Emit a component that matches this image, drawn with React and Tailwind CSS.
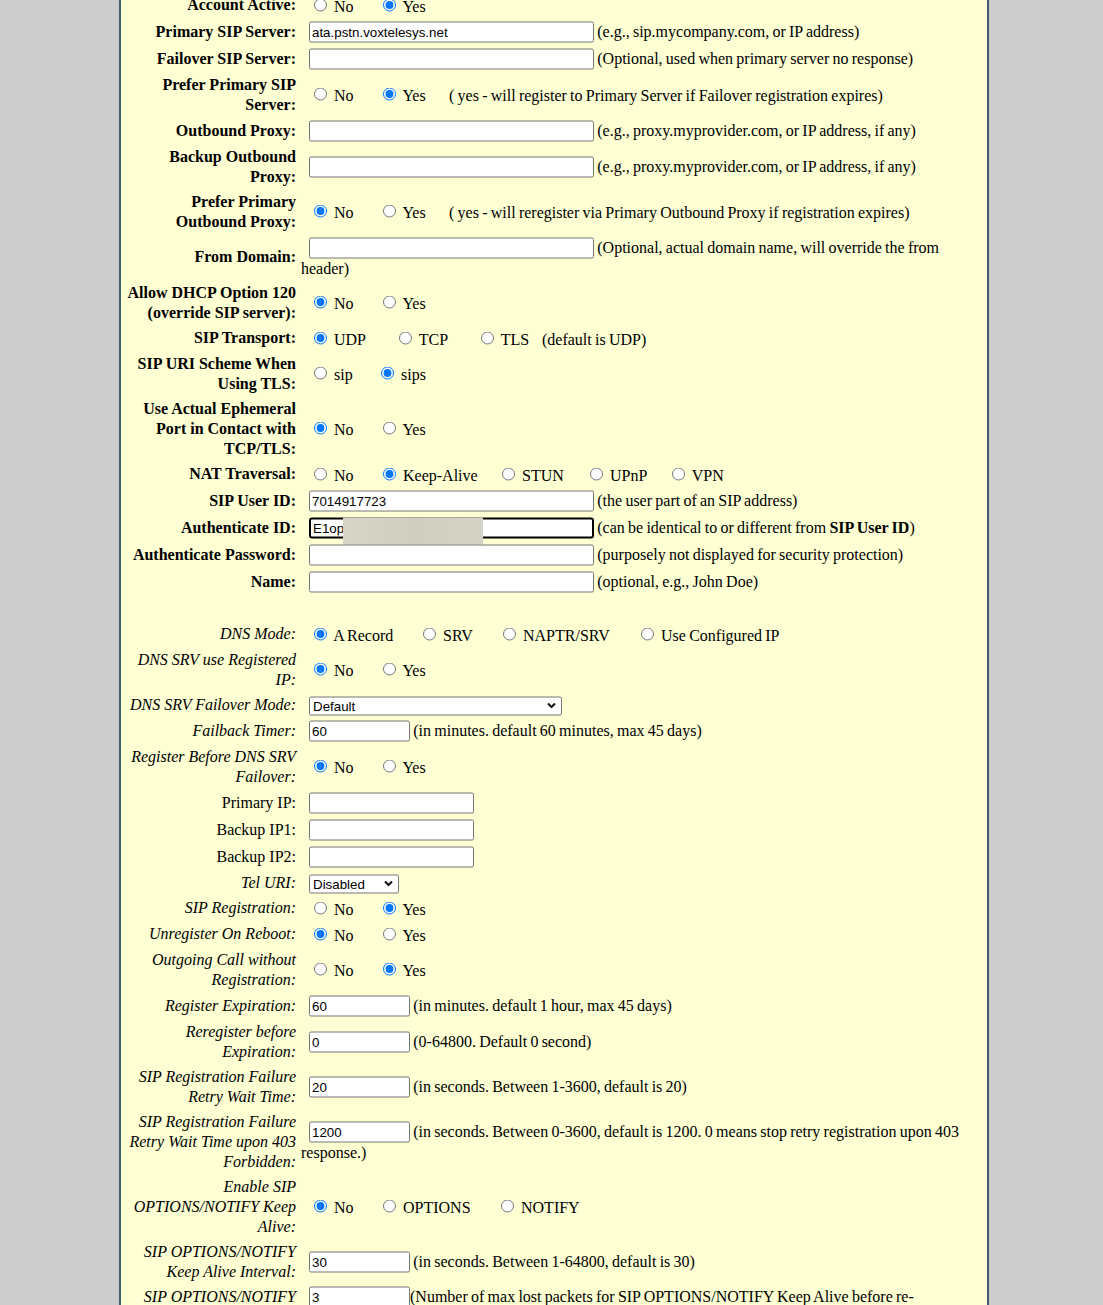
import React from "react";
import clsx from "clsx";

// ---- small form pieces ----------------------------------------------------

function Field({ w = "w-[285px]", value = "", focused = false }) {
  return (
    <input
      type="text"
      readOnly
      value={value}
      className={clsx(
        "h-[21px] bg-white px-[2px] align-baseline text-[13.33px] text-black font-['Liberation_Sans',Arial,sans-serif] outline-none [word-spacing:0]",
        w,
        focused
          ? "border-2 border-black rounded-[3px]"
          : "border border-[#767676] rounded-[2px]"
      )}
    />
  );
}

function Pick({ w, value }) {
  return (
    <span
      className={clsx(
        "inline-flex h-[19px] items-center justify-between rounded-[2px] border border-[#767676] bg-white pl-[3px] pr-[5px] align-middle text-[13.33px] leading-none font-['Liberation_Sans',Arial,sans-serif]",
        w
      )}
    >
      <span>{value}</span>
      <svg width="9" height="6" viewBox="0 0 9 6">
        <polyline points="1,1 4.5,4.5 8,1" fill="none" stroke="#111" strokeWidth="2" />
      </svg>
    </span>
  );
}

// opts: [label, checked, widthClass]
function Radios({ opts }) {
  return opts.map(([text, checked, w], i) => (
    <label key={i} className={clsx("inline-block whitespace-nowrap", w)}>
      <input
        type="radio"
        readOnly
        checked={checked}
        className="ml-[5px] mr-[3.75px] mt-[3px]"
      />{" "}
      {text}
    </label>
  ));
}

const noYes = (yes) => [
  ["No", !yes, "w-[69px]"],
  ["Yes", yes],
];

// ---- row data -------------------------------------------------------------

const rows = [
  { label: ["Account Active:"], kind: "b", h: "min-h-[26px]", value: <Radios opts={noYes(true)} /> },
  {
    label: ["Primary SIP Server:"], kind: "b", h: "min-h-[27px]",
    value: <><Field value="ata.pstn.voxtelesys.net" /> (e.g., sip.mycompany.com, or IP address)</>,
  },
  {
    label: ["Failover SIP Server:"], kind: "b", h: "min-h-[27px]",
    value: <><Field /> (Optional, used when primary server no response)</>,
  },
  {
    label: ["Prefer Primary SIP", "Server:"], kind: "b", h: "min-h-[26px]",
    value: (
      <>
        <Radios opts={[["No", false, "w-[69px]"], ["Yes", true, "w-[71px]"]]} />( yes - will register to Primary Server if Failover registration expires)
      </>
    ),
  },
  {
    label: ["Outbound Proxy:"], kind: "b", h: "min-h-[27px]",
    value: <><Field /> (e.g., proxy.myprovider.com, or IP address, if any)</>,
  },
  {
    label: ["Backup Outbound", "Proxy:"], kind: "b", h: "min-h-[27px]",
    value: <><Field /> (e.g., proxy.myprovider.com, or IP address, if any)</>,
  },
  {
    label: ["Prefer Primary", "Outbound Proxy:"], kind: "b", h: "min-h-[26px]",
    value: (
      <>
        <Radios opts={[["No", true, "w-[69px]"], ["Yes", false, "w-[71px]"]]} />( yes - will reregister via Primary Outbound Proxy if registration expires)
      </>
    ),
  },
  {
    label: ["From Domain:"], kind: "b", h: "min-h-[46px]",
    value: <><Field /> (Optional, actual domain name, will override the from<br />header)</>,
  },
  {
    label: ["Allow DHCP Option 120", "(override SIP server):"], kind: "b", h: "min-h-[26px]",
    value: <Radios opts={noYes(false)} />,
  },
  {
    label: ["SIP Transport:"], kind: "b", h: "min-h-[26px]",
    value: (
      <>
        <Radios opts={[["UDP", true, "w-[85px]"], ["TCP", false, "w-[82px]"], ["TLS", false, "w-[66px]"]]} />(default is UDP)
      </>
    ),
  },
  {
    label: ["SIP URI Scheme When", "Using TLS:"], kind: "b", h: "min-h-[26px]",
    value: <Radios opts={[["sip", false, "w-[67px]"], ["sips", true]]} />,
  },
  {
    label: ["Use Actual Ephemeral", "Port in Contact with", "TCP/TLS:"], kind: "b", h: "min-h-[26px]",
    value: <Radios opts={noYes(false)} />,
  },
  {
    label: ["NAT Traversal:"], kind: "b", h: "min-h-[26px]",
    value: (
      <Radios
        opts={[
          ["No", false, "w-[69px]"],
          ["Keep-Alive", true, "w-[119px]"],
          ["STUN", false, "w-[88px]"],
          ["UPnP", false, "w-[82px]"],
          ["VPN", false],
        ]}
      />
    ),
  },
  {
    label: ["SIP User ID:"], kind: "b", h: "min-h-[27px]",
    value: <><Field value="7014917723" /> (the user part of an SIP address)</>,
  },
  {
    label: ["Authenticate ID:"], kind: "b", h: "min-h-[27px]",
    value: (
      <>
        <span className="relative inline-block">
          <Field value="E1op" focused />
          {/* masked part of the id */}
          <span className="absolute left-[34px] top-0 h-[27px] w-[140px] bg-gradient-to-r from-[#d6d6c8] via-[#cfcfc1] to-[#d4d4c6]" />
        </span>{" "}
        (can be identical to or different from <b>SIP User ID</b>)
      </>
    ),
  },
  {
    label: ["Authenticate Password:"], kind: "b", h: "min-h-[27px]",
    value: <><Field /> (purposely not displayed for security protection)</>,
  },
  {
    label: ["Name:"], kind: "b", h: "min-h-[27px]",
    value: <><Field /> (optional, e.g., John Doe)</>,
  },
  { label: [""], kind: "n", h: "min-h-[26px]", value: null },
  {
    label: ["DNS Mode:"], kind: "i", h: "min-h-[26px]",
    value: (
      <Radios
        opts={[
          ["A Record", true, "w-[109px]"],
          ["SRV", false, "w-[80px]"],
          ["NAPTR/SRV", false, "w-[138px]"],
          ["Use Configured IP", false],
        ]}
      />
    ),
  },
  {
    label: ["DNS SRV use Registered", "IP:"], kind: "i", h: "min-h-[26px]",
    value: <Radios opts={noYes(false)} />,
  },
  {
    label: ["DNS SRV Failover Mode:"], kind: "i", h: "min-h-[25px]",
    value: <Pick w="w-[253px]" value="Default" />,
  },
  {
    label: ["Failback Timer:"], kind: "i", h: "min-h-[27px]",
    value: <><Field w="w-[101px]" value="60" /> (in minutes. default 60 minutes, max 45 days)</>,
  },
  {
    label: ["Register Before DNS SRV", "Failover:"], kind: "i", h: "min-h-[26px]",
    value: <Radios opts={noYes(false)} />,
  },
  { label: ["Primary IP:"], kind: "n", h: "min-h-[27px]", value: <Field w="w-[165px]" /> },
  { label: ["Backup IP1:"], kind: "n", h: "min-h-[27px]", value: <Field w="w-[165px]" /> },
  { label: ["Backup IP2:"], kind: "n", h: "min-h-[27px]", value: <Field w="w-[165px]" /> },
  { label: ["Tel URI:"], kind: "i", h: "min-h-[25px]", value: <Pick w="w-[90px]" value="Disabled" /> },
  { label: ["SIP Registration:"], kind: "i", h: "min-h-[26px]", value: <Radios opts={noYes(true)} /> },
  { label: ["Unregister On Reboot:"], kind: "i", h: "min-h-[26px]", value: <Radios opts={noYes(false)} /> },
  {
    label: ["Outgoing Call without", "Registration:"], kind: "i", h: "min-h-[26px]",
    value: <Radios opts={noYes(true)} />,
  },
  {
    label: ["Register Expiration:"], kind: "i", h: "min-h-[27px]",
    value: <><Field w="w-[101px]" value="60" /> (in minutes. default 1 hour, max 45 days)</>,
  },
  {
    label: ["Reregister before", "Expiration:"], kind: "i", h: "min-h-[27px]",
    value: <><Field w="w-[101px]" value="0" /> (0-64800. Default 0 second)</>,
  },
  {
    label: ["SIP Registration Failure", "Retry Wait Time:"], kind: "i", h: "min-h-[27px]",
    value: <><Field w="w-[101px]" value="20" /> (in seconds. Between 1-3600, default is 20)</>,
  },
  {
    label: ["SIP Registration Failure", "Retry Wait Time upon 403", "Forbidden:"], kind: "i", h: "min-h-[27px]",
    value: (
      <>
        <Field w="w-[101px]" value="1200" /> (in seconds. Between 0-3600, default is 1200. 0 means stop retry registration upon 403
        <br />
        response.)
      </>
    ),
  },
  {
    label: ["Enable SIP", "OPTIONS/NOTIFY Keep", "Alive:"], kind: "i", h: "min-h-[26px]",
    value: <Radios opts={[["No", true, "w-[69px]"], ["OPTIONS", false, "w-[118px]"], ["NOTIFY", false]]} />,
  },
  {
    label: ["SIP OPTIONS/NOTIFY", "Keep Alive Interval:"], kind: "i", h: "min-h-[27px]",
    value: <><Field w="w-[101px]" value="30" /> (in seconds. Between 1-64800, default is 30)</>,
  },
  {
    label: ["SIP OPTIONS/NOTIFY", "Keep Alive Max Lost:"], kind: "i", h: "min-h-[27px]",
    value: (
      <>
        <Field w="w-[101px]" value="3" />(Number of max lost packets for SIP OPTIONS/NOTIFY Keep Alive before re-
        <br />
        registration)
      </>
    ),
  },
];

const labelKind = {
  b: "font-bold",
  i: "italic",
  n: "",
};

export default function App() {
  return (
    <div className="min-h-screen bg-[#cccccc] text-[16px] text-black font-['Liberation_Serif','Times_New_Roman',serif]">
      <div className="ml-[119px] min-h-screen w-[870px] overflow-hidden border-x-2 border-[#3f5b72] bg-[#ffffd4]">
        <div className="-mt-[8px]">
          {rows.map((r, i) => (
            <div key={i} className={clsx("flex", r.h)}>
              <div
                className={clsx(
                  "flex w-[178px] shrink-0 items-center justify-end whitespace-nowrap py-[2.5px] pr-[3px] text-right leading-[20px]",
                  labelKind[r.kind]
                )}
              >
                <div>
                  {r.label.map((l, j) => (
                    <React.Fragment key={j}>
                      {j > 0 && <br />}
                      {l}
                    </React.Fragment>
                  ))}
                </div>
              </div>
              <div className="flex flex-1 items-center pl-[2px] [word-spacing:-0.75px]">
                <div className="translate-y-[0.5px] leading-[20px]">
                  <span className="inline-block w-[8px]" />
                  {r.value}
                </div>
              </div>
            </div>
          ))}
        </div>
      </div>
    </div>
  );
}
